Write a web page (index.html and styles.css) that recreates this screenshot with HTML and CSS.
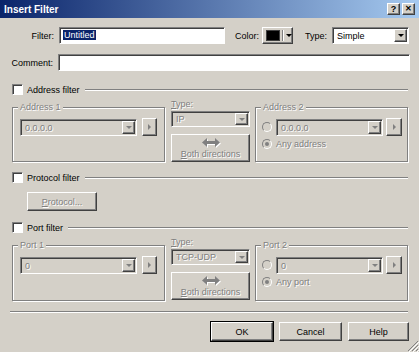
FILE: index.html
```html
<!DOCTYPE html>
<html lang="en">
<head>
    <meta charset="UTF-8">
    <title>Insert Filter</title>
    <link rel="stylesheet" href="styles.css">
</head>
<body>
<div class="dialog">
    <div class="titlebar">
        <span class="title">Insert Filter</span>
        <span class="tbtn raised">?</span>
        <span class="tbtn raised tclose">&#x2715;</span>
    </div>

    <!-- name / colour / type -->
    <div class="row row-first">
        <label class="lbl lbl-filter">Filter:</label>
        <div class="field sunken input-filter"><span class="sel">Untitled</span></div>
        <label class="lbl lbl-color">Color:</label>
        <div class="raised colorbtn">
            <span class="swatch"></span>
            <span class="vsep"></span>
            <span class="tri-down"></span>
        </div>
        <label class="lbl lbl-type">Type:</label>
        <div class="combo sunken select-type">
            <span class="combo-text">Simple</span>
            <span class="combo-arrow raised"><span class="tri-down"></span></span>
        </div>
    </div>
    <div class="row row-second">
        <label class="lbl lbl-comment">Comment:</label>
        <div class="field sunken input-comment"></div>
    </div>

    <!-- address filter -->
    <div class="sect sect-first">
        <span class="check sunken"></span>
        <span class="sect-label">Address filter</span>
        <span class="sect-line"></span>
    </div>
    <div class="filter">
        <div class="grp grp-left">
            <span class="legend dis">Address 1</span>
            <div class="grp-row">
                <div class="combo sunken combo-dis combo-1">
                    <span class="combo-text dis">0.0.0.0</span>
                    <span class="combo-arrow raised"><span class="tri-down off"></span></span>
                </div>
                <span class="arrowbtn raised"><span class="tri-right"></span></span>
            </div>
        </div>
        <div class="mid">
            <div class="mid-label dis"><u>T</u>ype:</div>
            <div class="combo sunken combo-dis combo-type">
                <span class="combo-text dis">IP</span>
                <span class="combo-arrow raised"><span class="tri-down off"></span></span>
            </div>
            <div class="raised bothbtn">
                <svg class="dbl" width="18" height="9" viewBox="0 0 18 9"><polygon points="0,4.5 5,0 5,3 13,3 13,0 18,4.5 13,9 13,6 5,6 5,9" fill="#808080"/></svg>
                <span class="dis"><u>B</u>oth directions</span>
            </div>
        </div>
        <div class="grp grp-right">
            <span class="legend dis">Address 2</span>
            <div class="grp-row">
                <span class="radio"></span>
                <div class="combo sunken combo-dis combo-2">
                    <span class="combo-text dis">0.0.0.0</span>
                    <span class="combo-arrow raised"><span class="tri-down off"></span></span>
                </div>
                <span class="arrowbtn raised arrowbtn-2"><span class="tri-right"></span></span>
            </div>
            <div class="grp-row grp-row-any">
                <span class="radio on"></span>
                <span class="dis">Any address</span>
            </div>
        </div>
    </div>

    <!-- protocol filter -->
    <div class="sect sect-proto">
        <span class="check sunken"></span>
        <span class="sect-label">Protocol filter</span>
        <span class="sect-line"></span>
    </div>
    <div class="raised btn protobtn"><span class="dis"><u>P</u>rotocol...</span></div>

    <!-- port filter -->
    <div class="sect sect-port">
        <span class="check sunken"></span>
        <span class="sect-label">Port filter</span>
        <span class="sect-line"></span>
    </div>
    <div class="filter">
        <div class="grp grp-left grp-port">
            <span class="legend dis">Port 1</span>
            <div class="grp-row">
                <div class="combo sunken combo-dis combo-1">
                    <span class="combo-text dis">0</span>
                    <span class="combo-arrow raised"><span class="tri-down off"></span></span>
                </div>
                <span class="arrowbtn raised"><span class="tri-right"></span></span>
            </div>
        </div>
        <div class="mid">
            <div class="mid-label dis"><u>T</u>ype:</div>
            <div class="combo sunken combo-dis combo-type">
                <span class="combo-text dis">TCP-UDP</span>
                <span class="combo-arrow raised"><span class="tri-down off"></span></span>
            </div>
            <div class="raised bothbtn">
                <svg class="dbl" width="18" height="9" viewBox="0 0 18 9"><polygon points="0,4.5 5,0 5,3 13,3 13,0 18,4.5 13,9 13,6 5,6 5,9" fill="#808080"/></svg>
                <span class="dis"><u>B</u>oth directions</span>
            </div>
        </div>
        <div class="grp grp-right grp-port">
            <span class="legend dis">Port 2</span>
            <div class="grp-row">
                <span class="radio"></span>
                <div class="combo sunken combo-dis combo-2">
                    <span class="combo-text dis">0</span>
                    <span class="combo-arrow raised"><span class="tri-down off"></span></span>
                </div>
                <span class="arrowbtn raised arrowbtn-2"><span class="tri-right"></span></span>
            </div>
            <div class="grp-row grp-row-any">
                <span class="radio on"></span>
                <span class="dis">Any port</span>
            </div>
        </div>
    </div>

    <div class="hsep"></div>

    <div class="buttons">
        <div class="raised btn btn-ok">OK</div>
        <div class="raised btn btn-cancel">Cancel</div>
        <div class="raised btn btn-help">Help</div>
    </div>

    <svg class="grip" width="12" height="12" viewBox="0 0 12 12">
        <path d="M11 1 L1 11 M11 5 L5 11 M11 9 L9 11" stroke="#808080" stroke-width="1"/>
        <path d="M12 2 L2 12 M12 6 L6 12 M12 10 L10 12" stroke="#fff" stroke-width="1"/>
    </svg>
</div>
</body>
</html>
```

FILE: styles.css
```css
* {
    box-sizing: border-box;
}
body {
    margin: 0;
    font-family: "Liberation Sans", Arial, sans-serif;
    font-size: 9px;
    color: #000;
}
.dialog {
    position: relative;
    width: 419px;
    height: 352px;
    background-color: #d4d0c8;
    overflow: hidden;
}

/* classic 3d borders */
.raised {
    background-color: #d4d0c8;
    border: 1px solid;
    border-color: #fff #404040 #404040 #fff;
    box-shadow: inset -1px -1px 0 #808080;
}
.sunken {
    border: 1px solid;
    border-color: #808080 #fff #fff #808080;
    box-shadow: inset 1px 1px 0 #404040;
}
.dis {
    color: #808080;
    text-shadow: 1px 1px 0 #fff;
}

/* title bar */
.titlebar {
    height: 18px;
    display: flex;
    align-items: center;
    padding: 0 4px;
    background: linear-gradient(to right, #0a246a, #a6caf0);
}
.title {
    flex: 1;
    color: #fff;
    font-weight: bold;
    font-size: 10px;
}
.tbtn {
    width: 13px;
    height: 12px;
    display: flex;
    align-items: center;
    justify-content: center;
    font-weight: bold;
    font-size: 9px;
    line-height: 1;
}
.tbtn + .tbtn {
    margin-left: 2px;
}
.tclose {
    font-size: 8px;
}

/* top rows */
.row {
    display: flex;
    align-items: center;
    height: 17px;
}
.row-first {
    margin-top: 9px;
}
.row-second {
    margin-top: 10px;
}
.lbl {
    text-align: right;
    padding-right: 5px;
}
.lbl-filter {
    width: 59px;
}
.lbl-color {
    width: 37px;
    padding-right: 3px;
}
.lbl-type {
    width: 39px;
}
.lbl-comment {
    width: 58px;
}
.field {
    height: 17px;
    background-color: #fff;
    padding: 2px 0 0 3px;
}
.input-filter {
    width: 166px;
}
.input-comment {
    width: 352px;
}
.sel {
    background-color: #0a246a;
    color: #fff;
    padding: 0 1px;
}
.colorbtn {
    width: 31px;
    height: 17px;
    display: flex;
    align-items: center;
    padding: 0 0 0 3px;
}
.swatch {
    width: 17px;
    height: 11px;
    background-color: #000;
    border: 1px solid #404040;
}
.vsep {
    width: 2px;
    height: 11px;
    margin: 0 2px;
    border-left: 1px solid #808080;
    border-right: 1px solid #fff;
}

/* combo boxes */
.combo {
    height: 17px;
    display: flex;
    align-items: stretch;
    padding: 1px;
    background-color: #fff;
}
.combo-dis {
    background-color: #d4d0c8;
}
.combo-text {
    flex: 1;
    padding: 2px 0 0 3px;
    white-space: nowrap;
    overflow: hidden;
}
.combo-arrow {
    width: 13px;
    display: flex;
    align-items: center;
    justify-content: center;
}
.select-type {
    width: 77px;
}
.tri-down {
    width: 0;
    height: 0;
    border-left: 3px solid transparent;
    border-right: 3px solid transparent;
    border-top: 3px solid #000;
}
.tri-down.off {
    border-top-color: #808080;
}
.tri-right {
    width: 0;
    height: 0;
    border-top: 3px solid transparent;
    border-bottom: 3px solid transparent;
    border-left: 3px solid #808080;
}

/* section headers */
.sect {
    display: flex;
    align-items: center;
    height: 11px;
    margin: 0 11px 0 12px;
}
.sect-first {
    margin-top: 13px;
}
.sect-proto {
    margin-top: 10px;
}
.sect-port {
    margin-top: 11px;
}
.check {
    width: 11px;
    height: 11px;
    background-color: #fff;
}
.sect-label {
    margin: 0 5px 0 4px;
}
.sect-line {
    flex: 1;
    border-top: 1px solid #808080;
    border-bottom: 1px solid #fff;
}

/* address / port blocks */
.filter {
    display: flex;
    align-items: flex-start;
    margin: 4px 0 0 12px;
}
.grp {
    position: relative;
    width: 153px;
    height: 55px;
    margin-top: 8px;
    padding: 10px 0 0 7px;
    border: 1px solid #808080;
    box-shadow: 1px 1px 0 #fff, inset 1px 1px 0 #fff;
}
.grp-right {
    padding-left: 6px;
}
.grp-port {
    height: 56px;
}
.legend {
    position: absolute;
    top: -6px;
    left: 5px;
    padding: 0 2px;
    line-height: 10px;
    background-color: #d4d0c8;
}
.grp-row {
    display: flex;
    align-items: center;
}
.grp-row-any {
    margin-top: 3px;
}
.combo-1 {
    width: 117px;
}
.combo-2 {
    width: 107px;
}
.arrowbtn {
    width: 15px;
    height: 18px;
    margin-left: 5px;
    display: flex;
    align-items: center;
    justify-content: center;
}
.arrowbtn-2 {
    width: 16px;
    margin-left: 3px;
}
.radio {
    width: 10px;
    height: 10px;
    margin-right: 4px;
    border-radius: 50%;
    border: 1px solid;
    border-color: #808080 #fff #fff #808080;
    background-color: #d4d0c8;
    display: flex;
    align-items: center;
    justify-content: center;
}
.radio.on::after {
    content: "";
    width: 4px;
    height: 4px;
    border-radius: 50%;
    background-color: #808080;
}
.mid {
    width: 79px;
    margin: 0 5px 0 6px;
}
.mid-label {
    line-height: 10px;
}
.combo-type {
    height: 16px;
    margin-top: 2px;
}
.combo-type .combo-text {
    padding-top: 1px;
}
.bothbtn {
    height: 28px;
    margin-top: 7px;
    display: flex;
    flex-direction: column;
    align-items: center;
    padding-top: 3px;
}
.dbl {
    display: block;
    margin-bottom: 2px;
    filter: drop-shadow(1px 1px 0 #fff);
}

/* buttons */
.btn {
    height: 19px;
    display: flex;
    align-items: center;
    justify-content: center;
}
.protobtn {
    width: 70px;
    margin: 9px 0 0 27px;
}
.hsep {
    margin: 10px 11px 0 10px;
    border-top: 1px solid #808080;
    border-bottom: 1px solid #fff;
}
.buttons {
    display: flex;
    justify-content: flex-end;
    gap: 6px;
    margin: 9px 10px 0 0;
}
.btn-ok {
    width: 62px;
    outline: 1px solid #000;
}
.btn-cancel {
    width: 63px;
}
.btn-help {
    width: 61px;
}
.grip {
    position: absolute;
    right: 0;
    bottom: 0;
}
```
